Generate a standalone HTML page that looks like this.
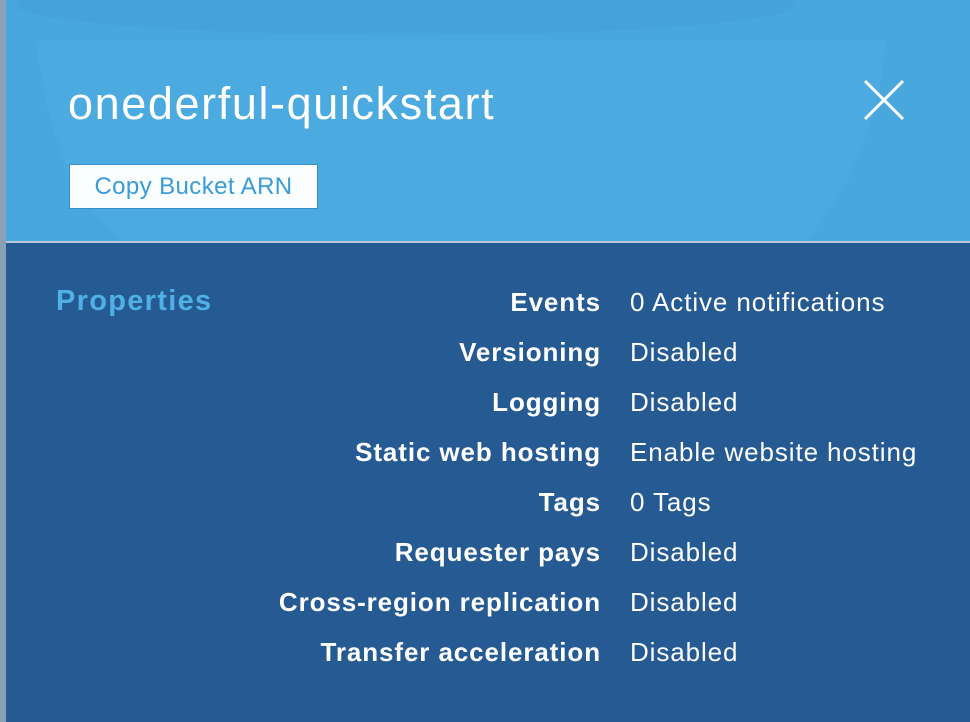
<!DOCTYPE html>
<html><head><style>
body{margin:0;width:970px;height:722px;overflow:hidden;background:#255a93;font-family:"Liberation Sans",Arial,sans-serif;position:relative}
.strip{position:absolute;left:0;top:0;width:6px;height:722px;background:#8aa0b6}
.hdr{position:absolute;left:6px;top:0;width:964px;height:241px;background:#48a8dd;overflow:hidden}
.sep{position:absolute;left:6px;top:241px;width:964px;height:2px;background:#b9c9d6}
.title{position:absolute;left:68px;top:78px;font-size:45px;color:#fff;letter-spacing:1.6px;white-space:nowrap}
.btn{position:absolute;left:69px;top:164px;width:249px;height:45px;background:#fbfeff;border:1px solid #3b8fc8;box-sizing:border-box;color:#3a9bd8;font-size:24px;line-height:43px;text-align:center;letter-spacing:0.4px;white-space:nowrap}
.close{position:absolute;left:862px;top:78px}
.props{position:absolute;left:56px;top:285px;font-size:29px;font-weight:bold;color:#4fb0e6;letter-spacing:1.3px}
.row{position:absolute;left:0;width:970px;font-size:26px;color:#fff;height:30px;line-height:30px}
.row b{position:absolute;right:369px;white-space:nowrap;letter-spacing:0.9px}
.row span{position:absolute;left:630px;white-space:nowrap;letter-spacing:0.9px}
</style></head><body>
<div class="strip"></div>
<div class="hdr">
<svg width="964" height="241" style="position:absolute;left:0;top:0">
<ellipse cx="400" cy="5" rx="390" ry="30" fill="#45a3d9"/>
<path d="M30 40 Q50 200 120 241 L800 241 Q870 160 880 40 Z" fill="#4eaee3" opacity="0.5"/>
</svg>
</div>
<div class="sep"></div>
<div class="title">onederful-quickstart</div>
<div class="btn">Copy Bucket ARN</div>
<svg class="close" width="44" height="44"><path d="M3 3L41 41M41 3L3 41" stroke="#fff" stroke-width="3"/></svg>
<div class="props">Properties</div>
<div class="row" style="top:287px"><b>Events</b><span>0 Active notifications</span></div>
<div class="row" style="top:337px"><b>Versioning</b><span>Disabled</span></div>
<div class="row" style="top:387px"><b>Logging</b><span>Disabled</span></div>
<div class="row" style="top:437px"><b>Static web hosting</b><span>Enable website hosting</span></div>
<div class="row" style="top:487px"><b>Tags</b><span>0 Tags</span></div>
<div class="row" style="top:537px"><b>Requester pays</b><span>Disabled</span></div>
<div class="row" style="top:587px"><b>Cross-region replication</b><span>Disabled</span></div>
<div class="row" style="top:637px"><b>Transfer acceleration</b><span>Disabled</span></div>
</body></html>
